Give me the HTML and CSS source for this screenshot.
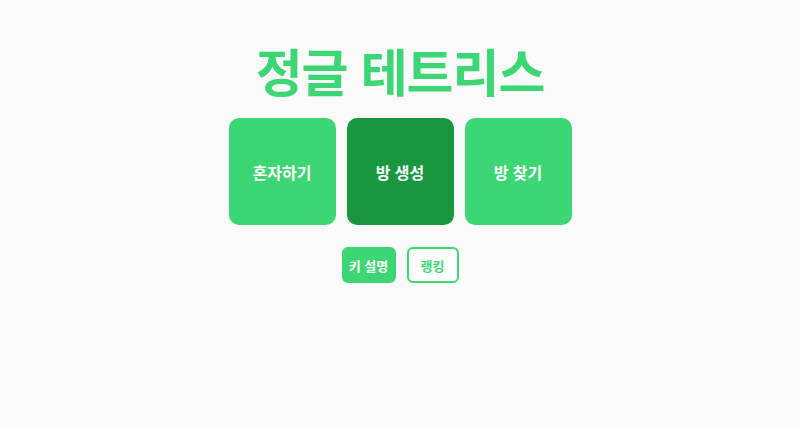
FILE: index.html
```html
<!DOCTYPE html>
<html lang="ko">
<head>
<meta charset="utf-8">
<title>정글 테트리스</title>
<link rel="stylesheet" href="styles.css">
</head>
<body>
<main class="home">
  <h1 class="title">정글 테트리스</h1>
  <div class="modes">
    <button class="mode">혼자하기</button>
    <button class="mode mode-active">방 생성</button>
    <button class="mode">방 찾기</button>
  </div>
  <div class="extras">
    <button class="small small-filled">키 설명</button>
    <button class="small small-outline">랭킹</button>
  </div>
</main>
</body>
</html>
```
FILE: styles.css
```css
html, body {
  margin: 0;
  padding: 0;
}
body {
  background: #fafafb;
  font-family: "Noto Sans CJK KR", "Noto Sans", sans-serif;
  height: 428px;
}
.home {
  display: flex;
  flex-direction: column;
  align-items: center;
  padding-top: 34px;
}
.title {
  margin: 0;
  font-size: 51px;
  line-height: 72px;
  font-weight: 700;
  color: #3dd674;
  letter-spacing: -0.02em;
}
.modes {
  display: flex;
  gap: 11px;
  margin-top: 12px;
}
.mode {
  width: 107px;
  height: 107px;
  border: none;
  border-radius: 10px;
  background: #3dd674;
  color: #fff;
  font-family: inherit;
  font-size: 16px;
  font-weight: 700;
  padding: 0;
}
.mode-active {
  background: #17983f;
}
.extras {
  display: flex;
  gap: 11px;
  margin-top: 22px;
}
.small {
  height: 36px;
  padding: 0;
  border-radius: 6px;
  font-family: inherit;
  font-size: 13px;
  font-weight: 700;
  white-space: nowrap;
  box-sizing: border-box;
}
.small-filled {
  background: #3dd674;
  color: #fff;
  border: 2px solid #3dd674;
  width: 54px;
}
.small-outline {
  background: #fff;
  color: #3dd674;
  border: 2px solid #3dd674;
  width: 52px;
}
```
